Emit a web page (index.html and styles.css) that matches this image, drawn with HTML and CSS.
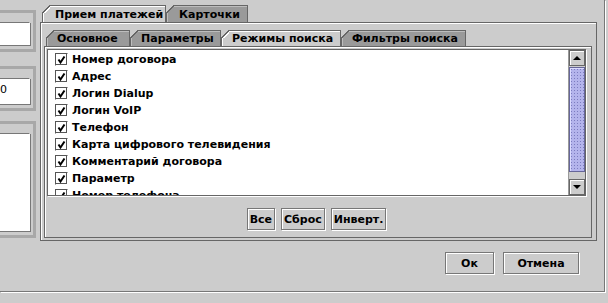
FILE: index.html
```html
<!DOCTYPE html>
<html lang="ru">
<head>
    <meta charset="UTF-8">
    <meta name="viewport" content="width=device-width, initial-scale=1.0">
    <title>Прием платежей</title>
    <link rel="stylesheet" href="styles.css">
</head>
<body>

<div class="window">
    <div class="main">
        <div class="side">
            <div class="group g1"><div class="field"></div></div>
            <div class="group g2"><div class="field">0</div></div>
            <div class="group g3"><div class="field"></div></div>
        </div>

        <div class="tabpane outer">
            <div class="tabrow">
                <div class="tab active t-pay">Прием платежей</div>
                <div class="tab t-cards">Карточки</div>
            </div>
            <div class="tabbody">
                <div class="tabpane inner">
                    <div class="tabrow">
                        <div class="tab t-main">Основное</div>
                        <div class="tab t-params">Параметры</div>
                        <div class="tab active t-modes">Режимы поиска</div>
                        <div class="tab t-filters">Фильтры поиска</div>
                    </div>
                    <div class="tabbody">
                        <div class="listbox">
                            <ul class="list" id="list"></ul>
                            <div class="scrollbar">
                                <div class="sb-btn up"><span class="arrow-up"></span></div>
                                <div class="sb-track">
                                    <div class="sb-thumb"></div>
                                </div>
                                <div class="sb-btn down"><span class="arrow-down"></span></div>
                            </div>
                        </div>
                        <div class="btnrow">
                            <button class="btn">Все</button>
                            <button class="btn">Сброс</button>
                            <button class="btn">Инверт.</button>
                        </div>
                    </div>
                </div>
            </div>
        </div>
    </div>

    <div class="footer">
        <button class="btn btn-ok">Ок</button>
        <button class="btn btn-cancel">Отмена</button>
    </div>
</div>

<script>
    const items = [
        'Номер договора',
        'Адрес',
        'Логин Dialup',
        'Логин VoIP',
        'Телефон',
        'Карта цифрового телевидения',
        'Комментарий договора',
        'Параметр',
        'Номер телефона'
    ];

    const checkSvg = '<svg width="11" height="11" viewBox="0 0 11 11"><polyline points="2.5,5.5 4.5,8.5 8.5,2.5" fill="none" stroke="#000" stroke-width="2"/></svg>';

    const list = document.getElementById('list');
    list.innerHTML = items.map(name =>
        `<li class="row"><span class="check">${checkSvg}</span><span class="label">${name}</span></li>`
    ).join('');
</script>

</body>
</html>
```

FILE: styles.css
```css
* {
    box-sizing: border-box;
}

body {
    margin: 0;
    width: 608px;
    height: 303px;
    overflow: hidden;
    background-color: #cccccc;
    font-family: 'DejaVu Sans', 'Liberation Sans', sans-serif;
    font-size: 11px;
    font-weight: bold;
    color: #000;
}

.window {
    width: 605px;
    height: 292px;
    border-right: 1px solid #777;
    border-bottom: 1px solid #777;
    box-shadow: 1px 1px 0 #fff;
    display: flex;
    flex-direction: column;
}

.main {
    display: flex;
    height: 241px;
    padding-top: 5px;
}

/* left column, cut off by the window edge */
.side {
    width: 40px;
    margin-top: 5px;
    display: flex;
    flex-direction: column;
    gap: 14px;
}

.group {
    width: 47px;
    margin-left: -11px;
    border: 3px solid #a8a8a8;
    padding: 9px 6px 4px 0;
}

.g1 { height: 42px; }
.g2 { height: 45px; }
.g3 { height: 117px; margin-top: -4px; }

.field {
    height: 100%;
    width: 38px;
    background: #fff;
    border-top: 1px solid #777;
    border-left: 1px solid #777;
    border-right: 1px solid #fff;
    box-shadow: 1px 1px 0 #777;
    font-weight: normal;
    line-height: 21px;
    padding-left: 3px;
}

.g2 .field {
    padding-left: 7px;
}

/* tabbed panes */
.tabpane {
    display: flex;
    flex-direction: column;
}

.outer {
    width: 557px;
    height: 236px;
}

.tabrow {
    display: flex;
    padding-left: 2px;
    position: relative;
    z-index: 1;
}

.tab {
    position: relative;
    background-color: #9a9a9a;
    border: 1px solid #666;
    border-bottom: none;
    box-shadow: inset 1px 1px 0 #bdbdbd;
    white-space: nowrap;
}

.tab::before {
    content: '';
    position: absolute;
    top: -1px;
    left: -1px;
    width: 8px;
    height: 8px;
    background: linear-gradient(135deg, #cccccc 0 46%, #666 46% 58%, transparent 58%);
}

.tab.active {
    background-color: #cccccc;
    box-shadow: inset 1px 1px 0 #fff;
    margin-bottom: -1px;
}

.tab.active::before {
    background: linear-gradient(135deg, #cccccc 0 46%, #666 46% 58%, #fff 58% 70%, transparent 70%);
}

.outer > .tabrow .tab {
    height: 17px;
    line-height: 17px;
    padding: 0 0 0 12px;
}

.t-pay { width: 124px; }
.t-cards { width: 82px; }

.outer > .tabbody {
    flex: 1;
    border: 1px solid #666;
    box-shadow: inset 1px 1px 0 #fff;
    padding: 7px 4px 2px 3px;
    display: flex;
}

.inner {
    flex: 1;
}

.inner > .tabrow .tab {
    height: 16px;
    line-height: 16px;
    padding: 0 0 0 10px;
}

.t-main { width: 84px; }
.t-params { width: 91px; }
.t-modes { width: 120px; }
.t-filters { width: 125px; }

.inner > .tabbody {
    flex: 1;
    border: 1px solid #666;
    box-shadow: inset 1px 1px 0 #fff;
    padding: 2px 5px 0 2px;
    display: flex;
    flex-direction: column;
}

/* checkbox list */
.listbox {
    height: 147px;
    display: flex;
    background: #fff;
    border: 1px solid #666;
    box-shadow: 1px 1px 0 #fff;
    overflow: hidden;
}

.list {
    flex: 1;
    margin: 0;
    padding: 1px 0 0 7px;
    list-style: none;
}

.row {
    height: 17px;
    display: flex;
    align-items: center;
    gap: 4px;
}

.check {
    width: 13px;
    height: 13px;
    border-top: 1px solid #555;
    border-left: 1px solid #555;
    border-right: 1px solid #fff;
    border-bottom: 1px solid #fff;
    box-shadow: inset -1px -1px 0 #555;
    display: flex;
}

/* scrollbar */
.scrollbar {
    width: 17px;
    display: flex;
    flex-direction: column;
    background: #cccccc;
    border-left: 1px solid #999;
}

.sb-btn {
    height: 16px;
    background: #cccccc;
    border: 1px solid #666;
    box-shadow: inset 1px 1px 0 #fff;
    display: flex;
    align-items: center;
    justify-content: center;
}

.arrow-up {
    border-left: 4px solid transparent;
    border-right: 4px solid transparent;
    border-bottom: 4px solid #000;
}

.arrow-down {
    border-left: 4px solid transparent;
    border-right: 4px solid transparent;
    border-top: 4px solid #000;
}

.sb-track {
    flex: 1;
    padding: 1px 0 6px 0;
}

.sb-thumb {
    height: 105px;
    background-color: #b4b4ec;
    background-image:
        radial-gradient(circle at 1.5px 1.5px, #7c7cc0 0.6px, transparent 0.8px);
    background-size: 3px 3px;
    border: 1px solid #666699;
    box-shadow: inset 1px 1px 0 #dcdcff;
}

/* buttons */
.btnrow {
    display: flex;
    justify-content: center;
    gap: 6px;
    margin-top: 12px;
}

.btn {
    height: 22px;
    padding: 0 2px;
    font-family: inherit;
    font-size: 11px;
    font-weight: bold;
    color: #000;
    background: #cccccc;
    border: 1px solid #777;
    border-radius: 0;
    box-shadow: inset 1px 1px 0 #fff, 1px 1px 0 #fff;
    cursor: pointer;
}

.footer {
    flex: 1;
    display: flex;
    justify-content: flex-end;
    align-items: flex-start;
    gap: 9px;
    padding: 11px 25px 0 0;
}

.btn-ok { width: 49px; }
.btn-cancel { width: 76px; }
```
